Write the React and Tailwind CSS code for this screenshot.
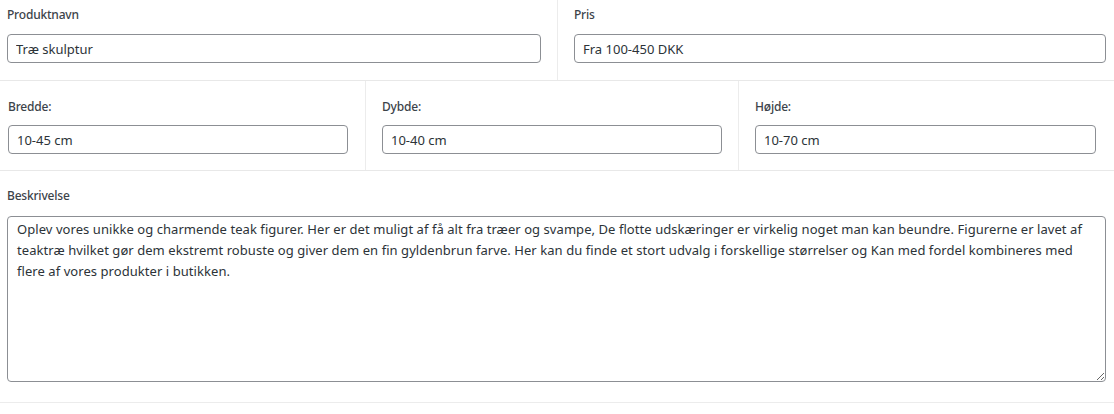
const inputCls =
  "block h-[29px] w-full rounded-[4px] border border-[#8c8f94] bg-white px-[8px] text-[13px] text-[#2c3338] outline-none";
const labelCls =
  "block text-[12px] font-medium leading-4 tracking-[-0.2px] text-[#3c434a]";

const description =
  "Oplev vores unikke og charmende teak figurer. Her er det muligt af få alt fra træer og svampe, De flotte udskæringer er virkelig noget man kan beundre. Figurerne er lavet af teaktræ hvilket gør dem ekstremt robuste og giver dem en fin gyldenbrun farve. Her kan du finde et stort udvalg i forskellige størrelser og Kan med fordel kombineres med flere af vores produkter i butikken.";

function Field({ label, value, labelGap }) {
  return (
    <>
      <label className={labelCls + " " + labelGap}>{label}</label>
      <input type="text" className={inputCls} defaultValue={value} />
    </>
  );
}

export default function App() {
  return (
    <div className="min-h-screen bg-white font-['Noto_Sans','Open_Sans',sans-serif]">
      <div className="grid grid-cols-[558px_1fr] border-b border-[#e8e8e8]">
        <div className="border-r border-[#ececec] pb-[17px] pl-[7px] pr-[16px] pt-[7px]">
          <Field label="Produktnavn" value="Træ skulptur" labelGap="mb-[11px]" />
        </div>
        <div className="pb-[17px] pl-[16px] pr-[8px] pt-[7px]">
          <Field label="Pris" value="Fra 100-450 DKK" labelGap="mb-[11px]" />
        </div>
      </div>

      <div className="grid grid-cols-[366px_373px_1fr] border-b border-[#e8e8e8]">
        <div className="border-r border-[#ececec] pb-[16px] pl-[8px] pr-[17px] pt-[18px]">
          <Field label="Bredde:" value="10-45 cm" labelGap="mb-[10px]" />
        </div>
        <div className="border-r border-[#ececec] pb-[16px] pl-[16px] pr-[16px] pt-[18px]">
          <Field label="Dybde:" value="10-40 cm" labelGap="mb-[10px]" />
        </div>
        <div className="pb-[16px] pl-[16px] pr-[18px] pt-[18px]">
          <Field label="Højde:" value="10-70 cm" labelGap="mb-[10px]" />
        </div>
      </div>

      <div className="border-b border-[#ececec] pb-[20px] pl-[7px] pr-[8px] pt-[17px]">
        <label className={labelCls + " mb-[12px]"}>Beskrivelse</label>
        <textarea
          className="block h-[166px] w-full rounded-[4px] border border-[#8c8f94] bg-white py-[2px] pl-[9px] pr-[8px] font-['Noto_Sans',sans-serif] text-[13px] leading-[21px] tracking-[0.06px] text-[#2c3338] outline-none"
          defaultValue={description}
        />
      </div>
    </div>
  );
}
